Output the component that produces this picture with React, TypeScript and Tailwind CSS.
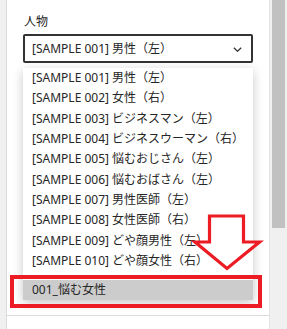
const items = [
  '[SAMPLE 001] 男性（左）',
  '[SAMPLE 002] 女性（右）',
  '[SAMPLE 003] ビジネスマン（左）',
  '[SAMPLE 004] ビジネスウーマン（右）',
  '[SAMPLE 005] 悩むおじさん（左）',
  '[SAMPLE 006] 悩むおばさん（左）',
  '[SAMPLE 007] 男性医師（左）',
  '[SAMPLE 008] 女性医師（右）',
  '[SAMPLE 009] どや顔男性（左）',
  '[SAMPLE 010] どや顔女性（右）',
];

export default function App() {
  return (
    <div
      className="relative flex w-[287px] h-[329px] bg-white overflow-hidden text-[12px] text-[#262626]"
      style={{ fontFamily: '"Noto Sans", "Noto Sans CJK JP", sans-serif' }}
    >
      {/* left gutter */}
      <div className="w-[7px] shrink-0 bg-[#f0f0f0] border-r border-[#dcdcdc]" />

      {/* panel */}
      <div className="w-[263px] shrink-0 border-r border-[#e2e2e2]">
        <div className="h-[316px] border-b border-[#dcdcdc] pl-[16px] pt-[14px]">
          <div className="h-[16px] leading-[16px] pl-[1px]">人物</div>

          <div className="mt-[4px] w-[230px] h-[29px] border-2 border-[#333] rounded-[2px] flex items-center justify-between pl-[7px] pr-[9px]">
            <span className="leading-none">[SAMPLE 001] 男性（左）</span>
            <svg width="9" height="5" viewBox="0 0 9 5" className="mt-[1px]">
              <path d="M0.8 0.8 L4.5 4.2 L8.2 0.8" fill="none" stroke="#333" strokeWidth="1.3" />
            </svg>
          </div>

          <div className="mt-[5px] w-[230px] bg-white shadow-[0_3px_10px_rgba(0,0,0,0.22)]">
            {items.map((t) => (
              <div key={t} className="h-[20.3px] flex items-center px-[9px] whitespace-nowrap">
                {t}
              </div>
            ))}
            <div className="h-[9px]" />
            <div className="h-[20px] flex items-center px-[9px] bg-[#cccccc]">001_悩む女性</div>
          </div>
        </div>
      </div>

      {/* scrollbar */}
      <div className="flex-1 bg-[#f0f0f0] pl-[2px] pr-[2px]">
        <div className="w-[13px] h-[228px] bg-[#c1c1c1]" />
      </div>

      {/* annotation: red box */}
      <div className="absolute left-[10px] top-[275px] w-[252px] h-[33px] border-4 border-[#ed1c24]" />

      {/* annotation: red arrow */}
      <svg className="absolute left-0 top-0" width="287" height="329" viewBox="0 0 287 329">
        <path
          d="M209.5 216 L243.5 216 L243.5 242 L259.5 242 L227 268.5 L195 242 L209.5 242 Z"
          fill="white"
          stroke="#ed1c24"
          strokeWidth="3.2"
          strokeLinejoin="miter"
        />
      </svg>
    </div>
  );
}
